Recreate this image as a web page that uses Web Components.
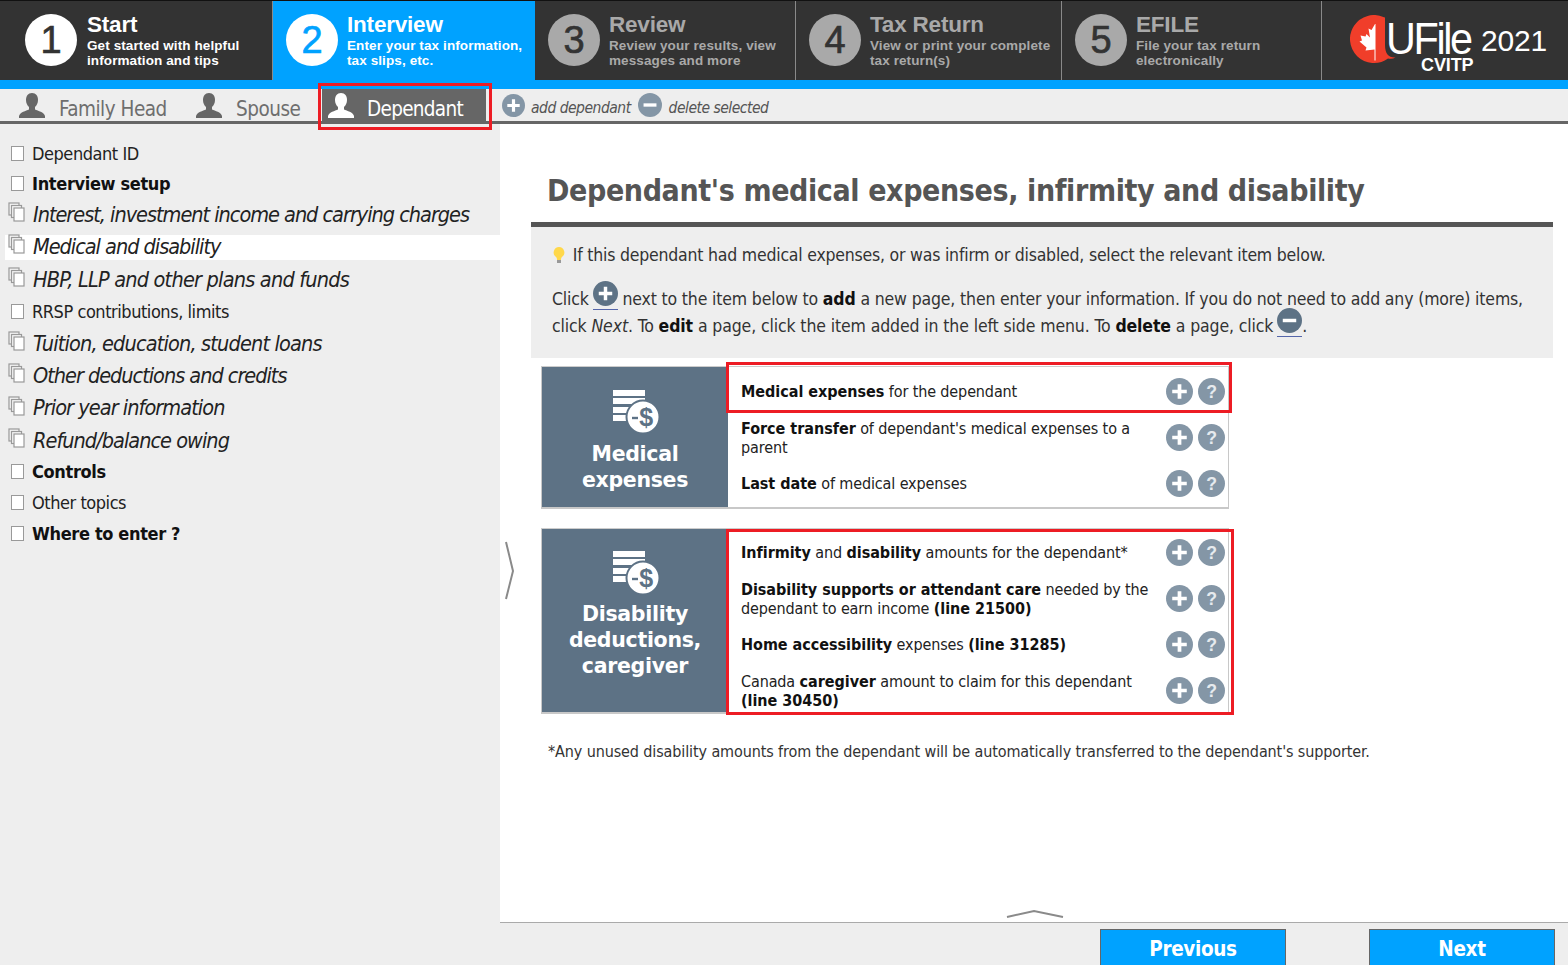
<!DOCTYPE html>
<html><head><meta charset="utf-8"><style>
html,body{margin:0;padding:0;width:1568px;height:965px;overflow:hidden;background:#fff}
body{font-family:"DejaVu Sans Condensed","DejaVu Sans",sans-serif}
app-shell{display:flex;flex-direction:column;height:965px}
</style></head><body>
<app-shell>
  <top-bar slot="top"></top-bar>
  <sub-nav slot="sub"></sub-nav>
  <side-menu slot="side"></side-menu>
  <main-pane slot="main"></main-pane>
</app-shell>
<script>
const PLUS=(s=27,c='#8496a6')=>`<svg width="${s}" height="${s}" viewBox="0 0 26 26"><circle cx="13" cy="13" r="13" fill="${c}"/><path d="M13 6v14M6 13h14" stroke="#fff" stroke-width="3.6"/></svg>`;
const MINUS=(s=25,c='#8496a6')=>`<svg width="${s}" height="${s}" viewBox="0 0 26 26"><circle cx="13" cy="13" r="13" fill="${c}"/><path d="M6 13h14" stroke="#fff" stroke-width="3.6"/></svg>`;
const HELP=`<svg width="27" height="27" viewBox="0 0 26 26"><circle cx="13" cy="13" r="13" fill="#8496a6"/><text x="13" y="19" text-anchor="middle" font-family="Liberation Sans" font-weight="700" font-size="17" fill="#e6eaee">?</text></svg>`;
const PERSON=(c)=>`<svg width="26" height="25" viewBox="0 0 26 25"><path fill="${c}" d="M13 0c4 0 6 3 6 7 0 3-1.300 5.500-3 7v2.500c3 1.500 9 2.500 10 6.500v2H0v-2c1-4 7-5 10-6.500V14c-1.700-1.500-3-4-3-7 0-4 2-7 6-7z"/></svg>`;
const COINS=`<svg width="48" height="46" viewBox="0 0 48 46"><g fill="#fff"><rect x="1" y="1" width="32" height="6"/><rect x="1" y="9" width="32" height="6"/><rect x="1" y="18" width="18" height="6"/><rect x="1" y="26" width="13" height="6"/><circle cx="31" cy="28" r="16.500" stroke="#5d7285" stroke-width="2"/></g><text x="34" y="37" text-anchor="middle" font-family="Liberation Sans" font-size="25" fill="#5d7285">$</text><path d="M20 29h6" stroke="#5d7285" stroke-width="2.400"/></svg>`;

function def(name,css,html){customElements.define(name,class extends HTMLElement{constructor(){super();const r=this.attachShadow({mode:'open'});r.innerHTML=`<style>${css}</style>`+(typeof html==='function'?html(this):html);}})}

customElements.define('app-shell',class extends HTMLElement{constructor(){super();this.attachShadow({mode:'open'}).innerHTML=`<style>:host{display:flex;flex-direction:column;height:965px}
.b{flex:1;display:flex;min-height:0}</style><slot name="top"></slot><slot name="sub"></slot><div class="b"><slot name="side"></slot><slot name="main"></slot></div>`}});

def('step-tab',`:host{display:flex;align-items:flex-start;box-sizing:border-box;padding:13px 0 0 var(--pl,25px);border-right:1px solid #8a8a8a;color:#a9a9a9;font-family:"Liberation Sans",Arial,sans-serif;--num:#333;--circ:#a9a9a9}
:host([on]){background:#00a2ff;color:#fff;--num:#00a2ff;--circ:#fff;border-right:0}
:host([done]){color:#fff;--circ:#fff}
.c{width:52px;height:52px;border-radius:50%;background:var(--circ);color:var(--num);font-size:38px;line-height:52px;text-align:center;flex:none;margin-right:var(--mr,9px);-webkit-text-stroke:.7px var(--num)}
.t{font-size:22.500px;font-weight:700;line-height:24px;margin-top:-1px;letter-spacing:-.2px}
.s{font-size:13.500px;font-weight:700;line-height:15px;margin-top:1px;white-space:nowrap;letter-spacing:.1px}`,
 h=>`<div class="c">${h.getAttribute('n')}</div><div><div class="t">${h.getAttribute('t')}</div><div class="s">${h.getAttribute('s')}</div></div>`);

def('ufile-logo',`:host{display:block;flex:1;position:relative;font-family:"Liberation Sans",Arial,sans-serif;color:#fff}
svg{position:absolute;left:28px;top:14px}
.u{position:absolute;left:64px;top:20px;font-size:44px;line-height:36px;letter-spacing:-2.500px;transform-origin:0 50%;transform:scaleX(.94)}
.y{position:absolute;left:159px;top:24px;font-size:30px;line-height:32px;letter-spacing:-.2px}
.c{position:absolute;left:99px;top:57px;font-size:18px;line-height:15px;font-weight:700;letter-spacing:-.1px}`,
`<svg width="48" height="50" viewBox="0 0 48 50"><path fill="#f03e2a" d="M34 2.200A24 24 0 1 0 38 43.500Q42 44.500 45.500 42.500C39 43 35 39 35 30V2.500z"/><path fill="#fff" d="M25 9l-3.500 6-3-1.500 1.500 9-3.500-3.500-1 2.500-5-1 1.500 5-2.500 1 7 6-1 3 9-1v11h1V9z"/></svg><div class="u">UFile</div><div class="y">2021</div><div class="c">CVITP</div>`);

def('top-bar',`:host{display:block;background:#333;border-top:1px solid #111;box-sizing:border-box;height:89px;border-bottom:9px solid #00a2ff}
.r{display:grid;grid-template-columns:273px 262px 261px 266px 260px 246px;height:79px}`,
`<div class="r">
<step-tab done n="1" t="Start" s="Get started with helpful<br>information and tips" style="--mr:10px"></step-tab>
<step-tab on n="2" t="Interview" s="Enter your tax information,<br>tax slips, etc." style="--pl:13px"></step-tab>
<step-tab n="3" t="Review" s="Review your results, view<br>messages and more" style="--pl:13px"></step-tab>
<step-tab n="4" t="Tax Return" s="View or print your complete<br>tax return(s)" style="--pl:13px"></step-tab>
<step-tab n="5" t="EFILE" s="File your tax return<br>electronically" style="--pl:13px"></step-tab>
<ufile-logo></ufile-logo></div>`);

def('person-tab',`:host{display:flex;align-items:center;gap:var(--g,13px);height:32px;box-sizing:border-box;padding-left:var(--p,20px);width:var(--w,auto);font-size:var(--f,20.5px);color:#6e6e6e;letter-spacing:var(--ls,-.5px);font-family:"DejaVu Sans Condensed",sans-serif}
:host([on]){background:#666;color:#fff;position:relative}
:host([on])::after{content:"";position:absolute;left:-4px;right:-6px;top:-6px;bottom:-9px;border:3px solid #ed1c24;box-sizing:border-box}
svg{display:block}
span{position:relative;top:4px}`,h=>PERSON(h.hasAttribute('on')?'#fff':'#666')+`<span><slot></slot></span>`);

def('sub-nav',`:host{display:flex;height:35px;box-sizing:border-box;background:#eee;border-bottom:3px solid #666}
.a{display:flex;align-items:center;gap:5px;font-size:15.500px;font-style:italic;color:#555;letter-spacing:-.5px;height:32px}
.a span{position:relative;top:3px}
svg{display:block}`,
`<person-tab style="--w:177px;--p:19px;--g:14px">Family Head</person-tab>
<person-tab style="--w:145px;--p:19px;--g:14px">Spouse</person-tab>
<person-tab on style="--w:164px;--p:6px;--g:13px;--ls:-.7px">Dependant</person-tab>
<div class="a" style="margin-left:16px;gap:6px">${PLUS(23)}<span>add dependant</span></div>
<div class="a" style="margin-left:7px;gap:7px">${MINUS(24)}<span>delete selected</span></div>`);

def('menu-item',`:host{display:flex;align-items:center;box-sizing:border-box;height:var(--h,30px);font-size:18px;color:#222;letter-spacing:-.45px;white-space:nowrap;padding-left:11px}
:host([b]){font-weight:700;color:#111;font-size:18px;letter-spacing:-.35px}
:host([i]){font-style:italic;font-size:21.500px;letter-spacing:var(--ls,-1.020px);padding-left:8px}
:host([sel]){background:linear-gradient(#fff,#fff) 5px 5px/495px 25px no-repeat}
.box{width:11px;height:13px;border:1.500px solid #999;background:#fff;margin-right:8px;flex:none}
svg{margin-right:7px;flex:none;display:block;margin-top:-4px}`,
h=>(h.hasAttribute('i')?`<svg width="18" height="20" viewBox="0 0 18 20" fill="#f4f4f4" stroke="#999" stroke-width="1.200"><rect x="1" y="1" width="10" height="12"/><rect x="3.500" y="3.500" width="10" height="12"/><rect x="6" y="6" width="10" height="13" fill="#fff"/></svg>`:`<span class="box"></span>`)+`<slot></slot>`);

def('side-menu',`:host{display:block;width:500px;flex:none;background:#eee;padding-top:14px;box-sizing:border-box}`,
`<menu-item>Dependant ID</menu-item>
<menu-item b>Interview setup</menu-item>
<menu-item i style="--h:32px">Interest, investment income and carrying charges</menu-item>
<menu-item i sel style="--h:32px">Medical and disability</menu-item>
<menu-item i style="--h:34px;--ls:-.78px">HBP, LLP and other plans and funds</menu-item>
<menu-item style="--h:31px">RRSP contributions, limits</menu-item>
<menu-item i style="--h:32px;--ls:-.84px">Tuition, education, student loans</menu-item>
<menu-item i style="--h:32px">Other deductions and credits</menu-item>
<menu-item i style="--h:33px;--ls:-.94px">Prior year information</menu-item>
<menu-item i style="--h:32px;--ls:-.97px">Refund/balance owing</menu-item>
<menu-item b style="--h:31px">Controls</menu-item>
<menu-item style="--h:31px">Other topics</menu-item>
<menu-item b>Where to enter ?</menu-item>`);

def('item-row',`:host{display:flex;align-items:center;box-sizing:border-box;height:var(--h,46px);padding-left:13px;font-size:16px;line-height:19.500px;color:#222;position:relative;letter-spacing:-.12px}
.t{width:425px;flex:none;white-space:nowrap;margin-top:2px}
.i{display:flex;gap:5px;flex:none}
svg{display:block}`,`<div class="t"><slot></slot></div><div class="i">${PLUS()}${HELP}</div>`);

def('cat-card',`:host{display:flex;width:688px;height:var(--ch);box-sizing:border-box;border:1px solid #c8c8c8;border-top-color:#ccc;border-bottom-width:2px;position:relative;background:#fff}
.l{width:186px;flex:none;background:#5d7285;color:#fff;display:flex;flex-direction:column;align-items:center;font-family:"DejaVu Sans",sans-serif;font-weight:700;font-size:20.500px;line-height:26px;text-align:center;letter-spacing:-.3px;box-sizing:border-box;padding-top:var(--pt,22px)}
.l svg{display:block;margin:0 0 var(--im,6px) 2px}
.r{flex:1;min-width:0;padding-top:var(--rp,1px)}
.hl{position:absolute;border:3px solid #ed1c24;box-sizing:border-box;left:184px;top:var(--ht);width:var(--hw);height:var(--hh)}`,
h=>`<div class="l">${COINS}<div><slot name="title"></slot></div></div><div class="r"><slot></slot></div><div class="hl"></div>`);

def('main-pane',`:host{flex:1;display:flex;flex-direction:column;min-width:0;background:#fff}
.c{flex:1;padding:0 15px 0 31px;min-height:0;position:relative}
h1{margin:0;height:103px;box-sizing:border-box;border-bottom:5px solid #555;padding:49px 0 0 16px;font-size:30px;line-height:36px;font-weight:700;color:#555;letter-spacing:-.38px;font-family:"DejaVu Sans Condensed",sans-serif;white-space:nowrap}
.info{background:#eee;height:131px;box-sizing:border-box;padding:15px 21px 0;font-size:17.500px;color:#333;letter-spacing:-.21px;line-height:27px;white-space:nowrap}
.info b{color:#111}
.info p{margin:0}
.info p+p{margin-top:17px;letter-spacing:-.155px}
.l3{letter-spacing:-.12px}
.u{display:inline-block;vertical-align:-1px;border-bottom:1.500px solid #5566aa;line-height:0;height:22px;margin:0 0 0 -1px}
.u svg{margin-top:-6px}
.bulb{vertical-align:-3px;margin:0 2px 0 0}
item-row b{color:#111;letter-spacing:-.03px}
.cards{padding:8px 0 0 10px;display:flex;flex-direction:column;gap:19px}
.note{margin:28px 0 0 17px;font-size:16px;color:#333;white-space:nowrap;line-height:20px;letter-spacing:-.115px}
.arrow-r{position:absolute;left:4px;top:417px}
.arrow-u{position:absolute;left:505px;top:785px}
.f{height:43px;box-sizing:border-box;background:#eee;border-top:1.500px solid #aaa;display:flex;justify-content:flex-end;gap:83px;padding:6px 13px 0 0}
.btn{width:186px;height:37px;box-sizing:border-box;background:#00a2ff;border:1.500px solid #666;border-bottom:0;color:#fff;font:700 20.500px/38px "DejaVu Sans Condensed",sans-serif;text-align:center;letter-spacing:-.35px}`,
`<div class="c">
<h1>Dependant's medical expenses, infirmity and disability</h1>
<div class="info">
<p><svg class="bulb" width="14" height="18" viewBox="0 0 14 18"><path fill="#ffd84a" d="M7 1a5.500 5.500 0 0 0-3 10c1 1 1 2 1 3h4c0-1 0-2 1-3A5.500 5.500 0 0 0 7 1z"/><rect x="5" y="14" width="4" height="3" fill="#999"/></svg> If this dependant had medical expenses, or was infirm or disabled, select the relevant item below.</p>
<p>Click <span class="u">${PLUS(25,'#5d7285')}</span> next to the item below to <b>add</b> a new page, then enter your information. If you do not need to add any (more) items,<br><span class="l3">click <i>Next</i>. To <b>edit</b> a page, click the item added in the left side menu. To <b>delete</b> a page, click <span class="u">${MINUS(25,'#5d7285')}</span>.</span></p>
</div>
<div class="cards">
<cat-card style="--ch:143px;--ht:-5px;--hw:506px;--hh:51px"><span slot="title">Medical<br>expenses</span>
 <item-row style="--h:46px"><b>Medical expenses</b> for the dependant</item-row>
 <item-row style="--h:46px"><b>Force transfer</b> of dependant's medical expenses to a<br>parent</item-row>
 <item-row style="--h:46px"><b>Last date</b> of medical expenses</item-row>
</cat-card>
<cat-card style="--ch:186px;--rp:0;--ht:0px;--hw:508px;--hh:186px;--pt:21px;--im:5px"><span slot="title">Disability<br>deductions,<br>caregiver</span>
 <item-row style="--h:46px"><b>Infirmity</b> and <b>disability</b> amounts for the dependant*</item-row>
 <item-row style="--h:46px"><b>Disability supports or attendant care</b> needed by the<br>dependant to earn income <b>(line 21500)</b></item-row>
 <item-row style="--h:46px"><b>Home accessibility</b> expenses <b>(line 31285)</b></item-row>
 <item-row style="--h:46px">Canada <b>caregiver</b> amount to claim for this dependant<br><b>(line 30450)</b></item-row>
</cat-card>
</div>
<div class="note">*Any unused disability amounts from the dependant will be automatically transferred to the dependant's supporter.</div>
<svg class="arrow-r" width="12" height="60" viewBox="0 0 12 60" fill="none" stroke="#8a8a8a" stroke-width="2"><path d="M2 1l7 29-7 28"/></svg>
<svg class="arrow-u" width="60" height="10" viewBox="0 0 60 10" fill="none" stroke="#8a8a8a" stroke-width="2"><path d="M2 8l27-6 29 6"/></svg>
</div>
<div class="f"><div class="btn">Previous</div><div class="btn">Next</div></div>`);
</script></body></html>
